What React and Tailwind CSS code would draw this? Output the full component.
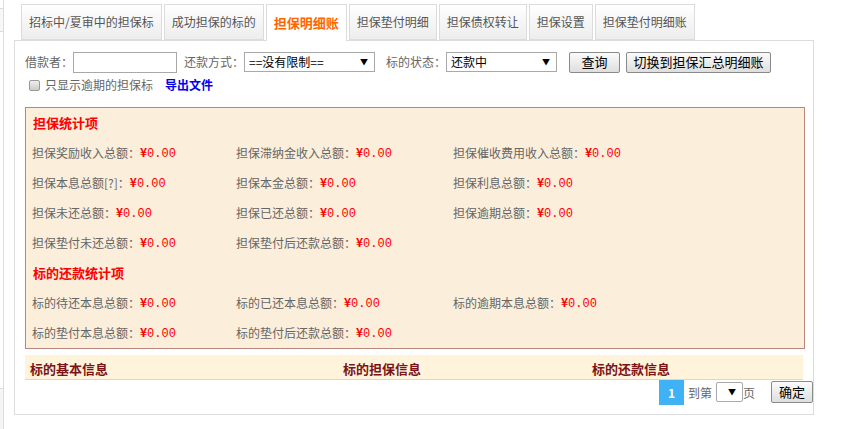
import React from 'react';

const font = { fontFamily: "'Noto Sans CJK SC', 'DejaVu Sans', sans-serif" };

const tabs = [
  '招标中/夏审中的担保标',
  '成功担保的标的',
  '担保明细账',
  '担保垫付明细',
  '担保债权转让',
  '担保设置',
  '担保垫付明细账',
];

const guarantee = [
  ['担保奖励收入总额：', '担保滞纳金收入总额：', '担保催收费用收入总额：'],
  ['担保本息总额[?]：', '担保本金总额：', '担保利息总额：'],
  ['担保未还总额：', '担保已还总额：', '担保逾期总额：'],
  ['担保垫付未还总额：', '担保垫付后还款总额：', null],
];

const repay = [
  ['标的待还本息总额：', '标的已还本息总额：', '标的逾期本息总额：'],
  ['标的垫付本息总额：', '标的垫付后还款总额：', null],
];

function Stat({ label }) {
  if (!label) return <div />;
  return (
    <div className="flex items-center text-[12px] text-[#666] whitespace-nowrap">
      <span>{label}</span>
      <span className="text-[#f00] text-[12px]" style={{ fontFamily: "'Liberation Mono', monospace" }}>
        <span className="font-bold" style={font}>¥</span>0.00
      </span>
    </div>
  );
}

function StatRows({ rows }) {
  return rows.map((r, i) => (
    <div key={i} className="grid grid-cols-[204px_217px_1fr] h-[30px] items-center">
      {r.map((c, j) => <Stat key={j} label={c} />)}
    </div>
  ));
}

function FakeSelect({ value, width }) {
  return (
    <div className={`flex items-center justify-between h-[20px] border border-[#a9a9a9] bg-white pl-[4px] pr-[6px] text-[12px] text-black ${width}`}>
      <span>{value}</span>
      <span className="text-[8px]">▼</span>
    </div>
  );
}

function Btn({ children, cls }) {
  return (
    <div className={`flex items-center justify-center h-[21px] border border-[#8a8a8a] rounded-[2px] bg-gradient-to-b from-[#fbfbfb] to-[#dedede] text-[13px] text-black ${cls}`}>
      {children}
    </div>
  );
}

export default function App() {
  return (
    <div className="w-[852px] h-[429px] bg-white flex" style={font}>
      {/* left stub */}
      <div className="w-[4px] flex flex-col border-r border-[#ddd]">
        <div className="h-[8px]" />
        <div className="h-[24px] bg-[#f7f7f7] border-t border-b border-[#ddd]" />
        <div className="h-[356px]" />
        <div className="flex-1 bg-[#f5f5f5] border-t border-[#ddd]" />
      </div>

      <div className="ml-[10px] w-[800px] flex flex-col">
        {/* tabs */}
        <div className="flex gap-[2px] pl-[7px] pt-[4px] h-[41px] -mb-[1px] relative z-10">
          {tabs.map((t, i) => (
            <div
              key={t}
              className={
                i === 2
                  ? 'px-[7px] h-[37px] flex items-center border border-b-0 border-[#dcdcdc] bg-white text-[13px] font-bold text-[#ff6600]'
                  : 'px-[7px] h-[36px] flex items-center border border-[#dcdcdc] bg-gradient-to-b from-white to-[#ededed] text-[12px] text-[#555]'
              }
            >
              {t}
            </div>
          ))}
        </div>

        {/* panel */}
        <div className="border border-[#dcdcdc] h-[375px] pl-[10px] pr-[8px] pt-[10px]">
          {/* filter row */}
          <div className="flex items-center h-[22px] text-[12px] text-[#666]">
            <span>借款者：</span>
            <div className="w-[104px] h-[21px] border border-[#a9a9a9] bg-white" />
            <span className="ml-[7px]">还款方式：</span>
            <FakeSelect value="==没有限制==" width="w-[131px]" />
            <span className="ml-[11px]">标的状态：</span>
            <FakeSelect value="还款中" width="w-[111px]" />
            <Btn cls="ml-[12px] w-[51px]">查询</Btn>
            <Btn cls="ml-[6px] w-[145px]">切换到担保汇总明细账</Btn>
          </div>

          {/* checkbox row */}
          <div className="flex items-center h-[22px] mt-[1px] text-[12px]">
            <div className="ml-[4px] w-[11px] h-[11px] rounded-[2px] border border-[#999] bg-gradient-to-b from-[#eee] to-[#ccc]" />
            <span className="ml-[5px] text-[#666]">只显示逾期的担保标</span>
            <span className="ml-[12px] font-bold text-[#0000ee]">导出文件</span>
          </div>

          {/* stats box */}
          <div className="mt-[11px] border border-[#b9877a] bg-[#fbeedb] pl-[6px] h-[242px]">
            <div className="h-[30px] flex items-center pl-[1px] text-[13px] font-bold text-[#f00]">担保统计项</div>
            <StatRows rows={guarantee} />
            <div className="h-[30px] flex items-center pl-[1px] text-[13px] font-bold text-[#f00]">标的还款统计项</div>
            <StatRows rows={repay} />
          </div>

          {/* header band */}
          <div className="mt-[6px] w-[778px] h-[25px] bg-[#fff3dc] border-b border-[#fbd38f] flex items-end pb-[1px] text-[13px] font-bold text-[#7b1416]">
            <span className="ml-[5px] w-[313px]">标的基本信息</span>
            <span className="w-[249px]">标的担保信息</span>
            <span>标的还款信息</span>
          </div>

          {/* pagination */}
          <div className="flex justify-end items-start text-[12px] text-[#666] -mr-[8px]">
            <div className="w-[25px] h-[25px] bg-[#3fb1f5] text-white font-bold flex items-center justify-center">1</div>
            <span className="ml-[4px] mt-[4px]">到第</span>
            <div className="ml-[4px] mt-[2px] w-[27px] h-[20px] border border-[#a9a9a9] rounded-[2px] bg-white flex items-center justify-end pr-[6px] text-[8px] text-black">▼</div>
            <span className="mt-[4px]">页</span>
            <Btn cls="ml-[16px] mt-[1px] w-[42px] h-[22px]">确定</Btn>
          </div>
        </div>
      </div>
    </div>
  );
}
